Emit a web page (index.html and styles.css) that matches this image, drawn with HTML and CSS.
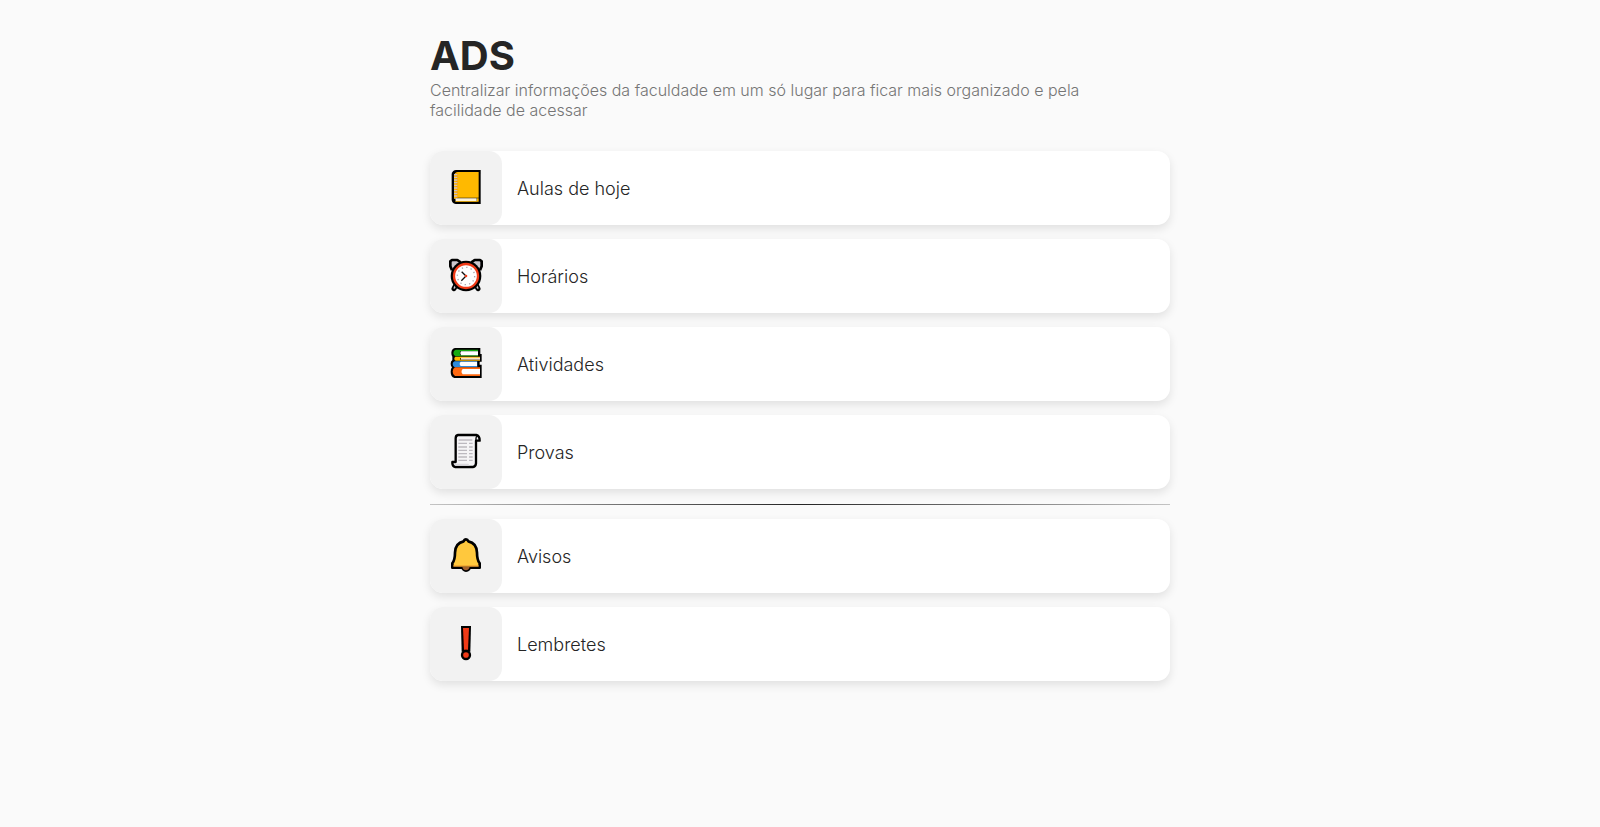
FILE: index.html
```
<!DOCTYPE html>
<html lang="pt-BR">
<head>
<meta charset="utf-8">
<meta name="viewport" content="width=device-width, initial-scale=1">
<title>ADS</title>
<link rel="stylesheet" href="styles.css">
</head>
<body>
<main class="page">
  <header class="intro">
    <h1 class="title">ADS</h1>
    <p class="subtitle">Centralizar informações da faculdade em um só lugar para ficar mais organizado e pela facilidade de acessar</p>
  </header>
  <nav class="links">
    <a class="card" href="#aulas">
      <span class="tile"><svg class="icon" viewBox="69 72 108 108" aria-hidden="true">
        <path d="M93 75H167V177H92Q80 174 80 164V86Q83 76 93 75Z" fill="#000"/>
        <path d="M97 81H161V158H96L87 162V90Q89 82 97 81Z" fill="#ffb900"/>
        <path d="M98 82V158L92 162V84Z" fill="#f7a400"/>
        <path d="M91 160H155V169H92Z" fill="#fff3d8"/>
        <path d="M91 170H161V160H156V168H91Z" fill="#ffb900"/>
        <path d="M92 87V160" stroke="#cfc0c4" stroke-width="10" stroke-dasharray="4 4" fill="none"/>
      </svg></span>
      <span class="label">Aulas de hoje</span>
    </a>
    <a class="card" href="#horarios">
      <span class="tile"><svg class="icon" viewBox="69 72 108 108" aria-hidden="true">
        <path d="M93 155L87 167M153 155L159 167" stroke="#000" stroke-width="15" stroke-linecap="round"/>
        <path d="M93 155L88 165M153 155L158 165" stroke="#c9c4ca" stroke-width="5" stroke-linecap="round"/>
        <path d="M81 112L76 100V85L81 81H97L107 88M165 112L170 100V85L165 81H149L139 88" fill="#ccc7cd" stroke="#000" stroke-width="8" stroke-linejoin="round"/>
        <circle cx="123" cy="129" r="46" fill="#000"/>
        <circle cx="123" cy="129" r="36" fill="#fff" stroke="#f03a17" stroke-width="7"/>
        <circle cx="123" cy="129" r="26" fill="none" stroke="#a5a2aa" stroke-width="4" stroke-dasharray="4 9.6"/>
        <path d="M110 116L123 129L109 143" fill="none" stroke="#111" stroke-width="4"/>
        <circle cx="123" cy="129" r="4" fill="#f03a17"/>
      </svg></span>
      <span class="label">Horários</span>
    </a>
    <a class="card" href="#atividades">
      <span class="tile"><svg class="icon" viewBox="69 75 108 108" aria-hidden="true">
        <path d="M90 84H166V102H170V125H164V134H170V174H88Q77 171 77 155Q77 146 81 142Q77 138 77 131Q77 124 82 120V110Q79 107 79 98Q80 86 90 84Z" fill="#000"/>
        <path d="M92 89H159V94H106Q102 100 106 106H159V109H92Q86 108 85 100Q85 91 92 89Z" fill="#16ab12"/>
        <path d="M108 94H159V106H108Q103 100 108 94Z" fill="#fff"/>
        <path d="M91 110H165V114H106V119H165V122H92Q87 120 88 114Z" fill="#ffb900"/>
        <path d="M108 113H165V119H108Z" fill="#f7e2d0"/>
        <path d="M89 124H157V142H89Q83 139 83 132Q83 126 89 124Z" fill="#2d8bdc"/>
        <path d="M107 125H156V138H107Q101 131 107 125Z" fill="#fff"/>
        <path d="M90 142H165V168H90Q83 164 83 155Q83 146 90 142Z" fill="#ff6810"/>
        <path d="M113 147H165V163H113Q106 155 113 147Z" fill="#fff"/>
      </svg></span>
      <span class="label">Atividades</span>
    </a>
    <a class="card" href="#provas">
      <span class="tile"><svg class="icon" viewBox="69 78 108 108" aria-hidden="true">
        <path d="M99 84H154Q164 86 164 101H153V169Q152 179 144 180H91Q81 178 82 165H92V94Q92 85 99 84Z" fill="#f5f4f6" stroke="#000" stroke-width="7" stroke-linejoin="round"/>
        <path d="M153 99V93Q153 88 158 88" fill="none" stroke="#000" stroke-width="4"/>
        <path d="M87 170H130Q131 176 138 176H92Q87 175 87 170Z" fill="#d9d7dc"/>
        <path d="M101 99H142" stroke="#b8b5bb" stroke-width="4"/>
        <path d="M100 109H126M100 120H126M100 130H126M100 140H126M100 150H126M100 160H126M132 109H143M132 120H143M132 130H143M132 140H143M132 150H143M132 160H143" stroke="#bcb9bf" stroke-width="4"/>
      </svg></span>
      <span class="label">Provas</span>
    </a>
    <hr class="divider">
    <a class="card" href="#avisos">
      <span class="tile"><svg class="icon" viewBox="69 75 108 108" aria-hidden="true">
        <path d="M107 163H140Q136 180 123 180Q111 180 107 163Z" fill="#000"/>
        <path d="M123 82Q128 82 130 88Q155 93 156 122Q156 143 164 154V167H82V154Q90 143 90 122Q91 93 116 88Q118 82 123 82Z" fill="#ffc83d" stroke="#000" stroke-width="8" stroke-linejoin="round"/>
        <path d="M85 160H161V164H85Z" fill="#f0a030"/>
        <path d="M112 165H134Q131 175 123 175Q115 175 112 165Z" fill="#a3612c"/>
      </svg></span>
      <span class="label">Avisos</span>
    </a>
    <a class="card" href="#lembretes">
      <span class="tile"><svg class="icon" viewBox="69 75 108 108" aria-hidden="true">
        <path d="M108 78H138L136 155H110Z" fill="#000"/>
        <path d="M114 84H132L129 149H117Z" fill="#f03a17"/>
        <circle cx="123" cy="165" r="12" fill="#f03a17" stroke="#000" stroke-width="7"/>
      </svg></span>
      <span class="label">Lembretes</span>
    </a>
  </nav>
</main>
</body>
</html>
```
FILE: styles.css
```
* {
  box-sizing: border-box;
  margin: 0;
}

body {
  background: #fafafa;
  color: #252525;
  font-family: Inter, "Liberation Sans", sans-serif;
}

.page {
  max-width: 740px;
  margin: 0 auto;
  padding: 32px 0;
}

.title {
  font-size: 40px;
  font-weight: 700;
  line-height: 48px;
}

.subtitle {
  max-width: 680px;
  color: #757575;
  font-size: 16px;
  font-weight: 300;
  line-height: 20px;
}

.links {
  display: flex;
  flex-direction: column;
  gap: 14px;
  margin-top: 31px;
}

.card {
  display: flex;
  align-items: center;
  gap: 15px;
  min-height: 74px;
  border-radius: 13px;
  background: #fff;
  box-shadow: 0 4px 10px rgba(0, 0, 0, 0.1);
  color: inherit;
  text-decoration: none;
}

.tile {
  display: flex;
  align-items: center;
  justify-content: center;
  align-self: stretch;
  width: 72px;
  padding-bottom: 2px;
  border-radius: 13px;
  background: #f2f2f2;
}

.icon {
  width: 36px;
  height: 36px;
}

.label {
  font-size: 18px;
  font-weight: 300;
}

.divider {
  width: 100%;
  height: 1px;
  margin-top: 1px;
  border: 0;
  background: linear-gradient(to right, #c4c4c4, #252525, #c4c4c4);
}
```
